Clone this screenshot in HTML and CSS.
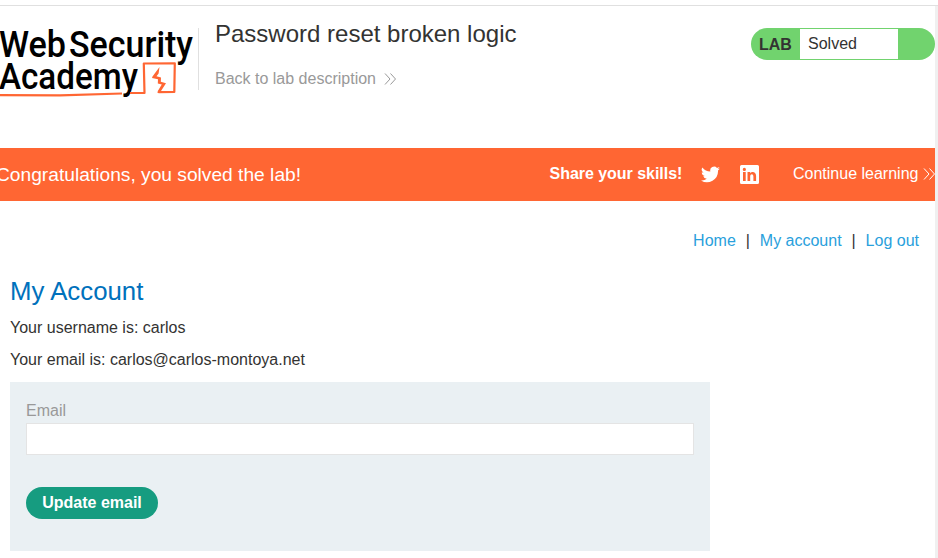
FILE: index.html
```html
<!DOCTYPE html>
<html lang="en">
<head>
<meta charset="utf-8">
<title>Password reset broken logic</title>
<link rel="stylesheet" href="styles.css">
</head>
<body>
<div class="page">
  <header class="lab-header">
    <svg class="logo" width="198" height="76" viewBox="0 24 198 76" role="img" aria-label="Web Security Academy">
      <g class="logo-text">
        <text x="-1" y="56.5" textLength="67" lengthAdjust="spacingAndGlyphs">Web</text>
        <text x="69" y="56.5" textLength="124" lengthAdjust="spacingAndGlyphs">Security</text>
        <text x="-1" y="89" textLength="139" lengthAdjust="spacingAndGlyphs">Academy</text>
      </g>
      <path class="logo-line" d="M0 95.200L60 95.300L122 93.500M130 93L144.500 93L143.800 63.500L174.800 63.300L174.300 92L158.500 92.200"/>
      <path class="logo-bolt" d="M159.500 67L158.600 73.500L156.500 76.300L161 77.500L160.800 81.800L166 83.300L161 91L162 93L157.500 93L157.800 91L161.800 84.500L157.800 83.500L158 79.300L152 78L152.500 76.500Z"/>
    </svg>
    <div class="title">
      <h1>Password reset broken logic</h1>
      <a class="back"><span>Back to lab description</span>
        <svg width="13" height="12" viewBox="0 0 13 12"><path d="M1 .5L6 6L1 11.500M6.500 .5L11.500 6L6.500 11.500"/></svg></a>
    </div>
    <div class="status"><b>LAB</b><span>Solved</span></div>
  </header>
  <section class="banner">
    <p class="congrats">Congratulations, you solved the lab!</p>
    <b class="share">Share your skills!</b>
    <svg class="twitter" width="19" height="17" viewBox="0 0 24 20"><path d="M24 2.400a10 10 0 0 1-2.800.8A5 5 0 0 0 23.300.5a10 10 0 0 1-3.100 1.200A4.900 4.900 0 0 0 11.800 6.200 14 14 0 0 1 1.700 1a4.900 4.900 0 0 0 1.500 6.600A5 5 0 0 1 1 7a4.900 4.900 0 0 0 3.900 4.900 5 5 0 0 1-2.200.1 4.900 4.900 0 0 0 4.600 3.400A10 10 0 0 1 0 17.500 14 14 0 0 0 21.500 5z"/></svg>
    <svg class="linkedin" width="19" height="19" viewBox="0 0 19 19"><path fill-rule="evenodd" d="M1.500 0h16Q19 0 19 1.500v16q0 1.500-1.500 1.500h-16Q0 19 0 17.500v-16Q0 0 1.500 0zM3 7v9h2.700V7zM4.350 2.800a1.600 1.600 0 1 0 0 3.200 1.600 1.600 0 0 0 0-3.200zM7.500 7v9h2.700v-4.500c0-3 3.200-3 3.200 0V16h2.700v-5c0-4.600-4.300-5-5.900-2.700V7z"/></svg>
    <a class="continue"><span>Continue learning</span>
      <svg width="13" height="12" viewBox="0 0 13 12"><path d="M1 .5L6 6L1 11.500M6.500 .5L11.500 6L6.500 11.500"/></svg></a>
  </section>
  <main>
    <nav><a>Home</a><i>|</i><a>My account</a><i>|</i><a>Log out</a></nav>
    <h2>My Account</h2>
    <p class="info">Your username is: carlos</p>
    <p class="info">Your email is: carlos@carlos-montoya.net</p>
    <form>
      <label for="email">Email</label>
      <input id="email" type="email">
      <button type="button">Update email</button>
    </form>
  </main>
</div>
</body>
</html>
```
FILE: styles.css
```css
* { box-sizing: border-box; }
body {
  margin: 0;
  height: 558px;
  overflow: hidden;
  padding-top: 5px;
  background: #fff;
  color: #333332;
  font: 16px/20px "Liberation Sans", Arial, sans-serif;
}
.page {
  height: 553px;
  border-top: 1px solid #e0e0e0;
  background: linear-gradient(#f0f0f0, #f0f0f0) right / 3px 100% no-repeat;
  padding-right: 3px;
}
h1, h2, p { margin: 0; font-weight: 400; }
.lab-header { display: flex; height: 142px; padding-top: 18px; }
.logo { display: block; flex: none; }
.logo-text { font: 500 37.5px Roboto, sans-serif; fill: #000; }
.logo-line { fill: none; stroke: #ff6633; stroke-width: 2.2; stroke-linejoin: round; }
.logo-bolt { fill: #ff6633; }
.title { height: 62px; margin-top: 4px; padding-left: 16px; border-left: 1px solid #e0e0e0; }
h1 { margin-top: -9px; font-size: 24px; line-height: 30px; white-space: nowrap; }
.back { display: flex; align-items: center; margin-top: 20px; color: #999; gap: 8px; }
.back svg { margin-top: -1px; }
.back svg, .continue svg { fill: none; stroke: currentColor; stroke-width: 1; }
.status {
  display: flex;
  width: 184px;
  height: 32px;
  margin: 4px 0 0 auto;
  padding: 1px 37px 1px 8px;
  border-radius: 16px;
  background: #71d36e;
  line-height: 30px;
}
.status b { width: 41px; line-height: 31px; }
.status span { flex: 1; padding-left: 8px; background: #fff; }
.banner {
  display: flex;
  align-items: center;
  height: 53px;
  overflow: hidden;
  background: #ff6633;
  color: #fff;
  white-space: nowrap;
}
.banner svg { flex: none; }
.congrats { flex: none; width: 553.5px; margin-left: -4px; font-size: 19.2px; }
.share { flex: none; width: 151.5px; margin-top: -1px; letter-spacing: -.03px; }
.twitter { margin-right: 20px; fill: #fff; }
.linkedin { margin-right: 34px; fill: #fff; }
.continue { display: flex; flex: none; align-items: center; gap: 5px; margin-top: -1px; }
main { padding: 30px 16px 0 10px; }
nav { display: flex; justify-content: flex-end; color: #333332; }
nav a { color: #29a0dc; }
nav i { width: 24px; text-align: center; font-style: normal; }
h2 { margin: 24px 0 11px; color: #0071bc; font-size: 25.8px; line-height: 32px; }
.info { margin-bottom: 12px; }
form { width: 700px; height: 169px; padding: 19px 16px; background: #eaf0f3; }
label { display: block; height: 22px; color: #999; }
input { display: block; width: 668px; height: 32px; margin: 0 0 32px; border: 1px solid #e4e4e4; background: #fff; }
button {
  width: 132px;
  height: 32px;
  padding: 0;
  border: 0;
  border-radius: 16px;
  background: #169c80;
  color: #fff;
  font: bold 16px/30px "Liberation Sans", Arial, sans-serif;
}
```
